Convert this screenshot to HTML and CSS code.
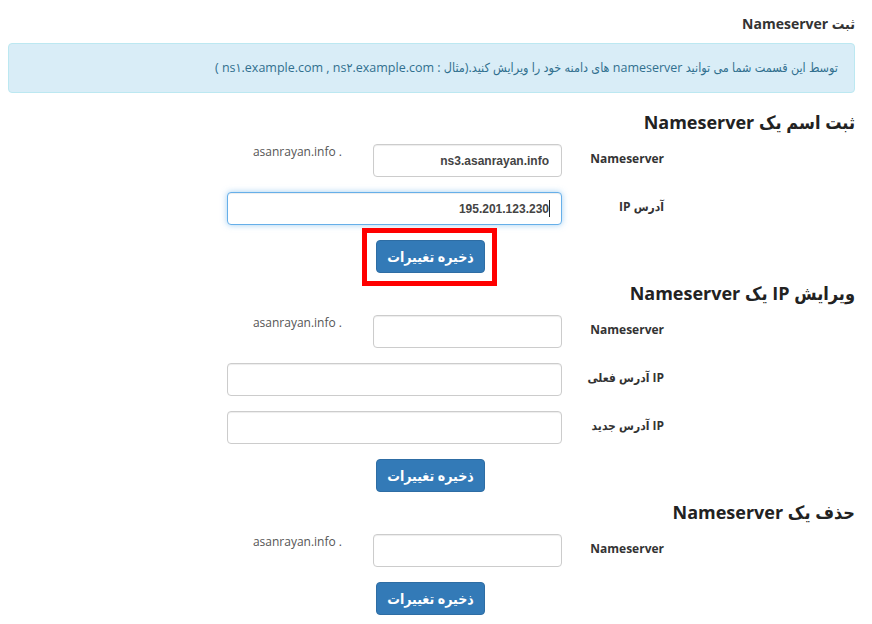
FILE: index.html
```html
<!DOCTYPE html>
<html lang="fa" dir="rtl">
<head>
<meta charset="utf-8">
<link rel="stylesheet" href="styles.css">
</head>
<body>
<div class="page">
  <div class="page-title">ثبت Nameserver</div>
  <div class="alert">توسط این قسمت شما می توانید nameserver های دامنه خود را ویرایش کنید.(مثال : ns۱.example.com , ns۲.example.com )</div>

  <h2 class="section-title">ثبت اسم یک Nameserver</h2>
  <div class="form-row">
    <label class="form-label">Nameserver</label>
    <div class="form-field">
      <input class="input input-short" type="text" value="ns3.asanrayan.info">
      <span class="suffix">asanrayan.info .</span>
    </div>
  </div>
  <div class="form-row">
    <label class="form-label">آدرس IP</label>
    <div class="form-field">
      <span class="caret-wrap"><input class="input input-long is-focused" type="text" value="195.201.123.230"><span class="caret"></span></span>
    </div>
  </div>
  <div class="btn-row">
    <span class="highlight"><button class="btn" type="button">ذخیره تغییرات</button></span>
  </div>

  <h2 class="section-title">ویرایش IP یک Nameserver</h2>
  <div class="form-row">
    <label class="form-label">Nameserver</label>
    <div class="form-field">
      <input class="input input-short" type="text">
      <span class="suffix">asanrayan.info .</span>
    </div>
  </div>
  <div class="form-row">
    <label class="form-label">IP آدرس فعلی</label>
    <div class="form-field">
      <input class="input input-long" type="text">
    </div>
  </div>
  <div class="form-row">
    <label class="form-label">IP آدرس جدید</label>
    <div class="form-field">
      <input class="input input-long" type="text">
    </div>
  </div>
  <div class="btn-row">
    <button class="btn" type="button">ذخیره تغییرات</button>
  </div>

  <h2 class="section-title">حذف یک Nameserver</h2>
  <div class="form-row">
    <label class="form-label">Nameserver</label>
    <div class="form-field">
      <input class="input input-short" type="text">
      <span class="suffix">asanrayan.info .</span>
    </div>
  </div>
  <div class="btn-row">
    <button class="btn" type="button">ذخیره تغییرات</button>
  </div>
</div>
</body>
</html>
```
FILE: styles.css
```css
html, body {
  margin: 0;
  padding: 0;
  background: #fff;
}
body {
  font-family: "Open Sans", "DejaVu Sans Condensed", "DejaVu Sans", sans-serif;
  color: #333;
  font-size: 13px;
  direction: rtl;
}
.page {
  padding: 14px 17px 0 8px;
}
.page-title {
  font-size: 14px;
  font-weight: 700;
  line-height: 20px;
  color: #333;
  margin-bottom: 9px;
}
.alert {
  background: #d9edf7;
  border: 1px solid #bce8f1;
  border-radius: 4px;
  color: #31708f;
  padding: 14px 16px;
  line-height: 20px;
  font-size: 12.5px;
}
.section-title {
  font-size: 18px;
  font-weight: 700;
  line-height: 26px;
  margin: 7px 0 9px;
  color: #222;
}
.alert + .section-title {
  margin-top: 16px;
}
.form-row {
  display: grid;
  grid-template-columns: 88px 335px;
  column-gap: 14px;
  padding-right: 191px;
  align-items: center;
  margin-bottom: 15px;
}
.form-label {
  font-size: 12px;
  font-weight: 700;
  color: #333;
  text-align: right;
  padding-bottom: 5px;
}
.form-field {
  display: flex;
  align-items: flex-start;
  gap: 31px;
}
.input {
  box-sizing: border-box;
  height: 33px;
  border: 1px solid #ccc;
  border-radius: 4px;
  padding: 6px 12px;
  font-family: "Liberation Sans", Arial, sans-serif;
  font-size: 12px;
  font-weight: 700;
  color: #444;
  direction: ltr;
  text-align: right;
  background: #fff;
  box-shadow: inset 0 1px 1px rgba(0,0,0,0.075);
  outline: none;
}
.input-short {
  width: 189px;
}
.input-long {
  width: 335px;
}
.input.is-focused {
  border-color: #66afe9;
  box-shadow: inset 0 1px 1px rgba(0,0,0,0.075), 0 0 6px rgba(102,175,233,0.6);
}
.caret-wrap {
  position: relative;
  display: inline-block;
}
.caret {
  position: absolute;
  right: 12px;
  top: 8px;
  width: 1px;
  height: 17px;
  background: #222;
}
.suffix {
  color: #555;
  font-size: 12px;
  line-height: 17px;
  margin-top: -1px;
  direction: ltr;
}
.btn-row {
  padding-right: 370px;
  margin-top: 1px;
  display: flex;
}
.btn {
  box-sizing: border-box;
  width: 109px;
  height: 33px;
  background: #337ab7;
  border: 1px solid #2e6da4;
  border-radius: 4px;
  color: #fff;
  font-family: "Open Sans", "DejaVu Sans Condensed", "DejaVu Sans", sans-serif;
  font-size: 14px;
  font-weight: 700;
  padding: 0;
}
.highlight {
  position: relative;
  display: inline-block;
}
.highlight::after {
  content: "";
  position: absolute;
  top: -12px;
  left: -14px;
  right: -12px;
  bottom: -13px;
  border: 5px solid #f00;
  pointer-events: none;
}
```
